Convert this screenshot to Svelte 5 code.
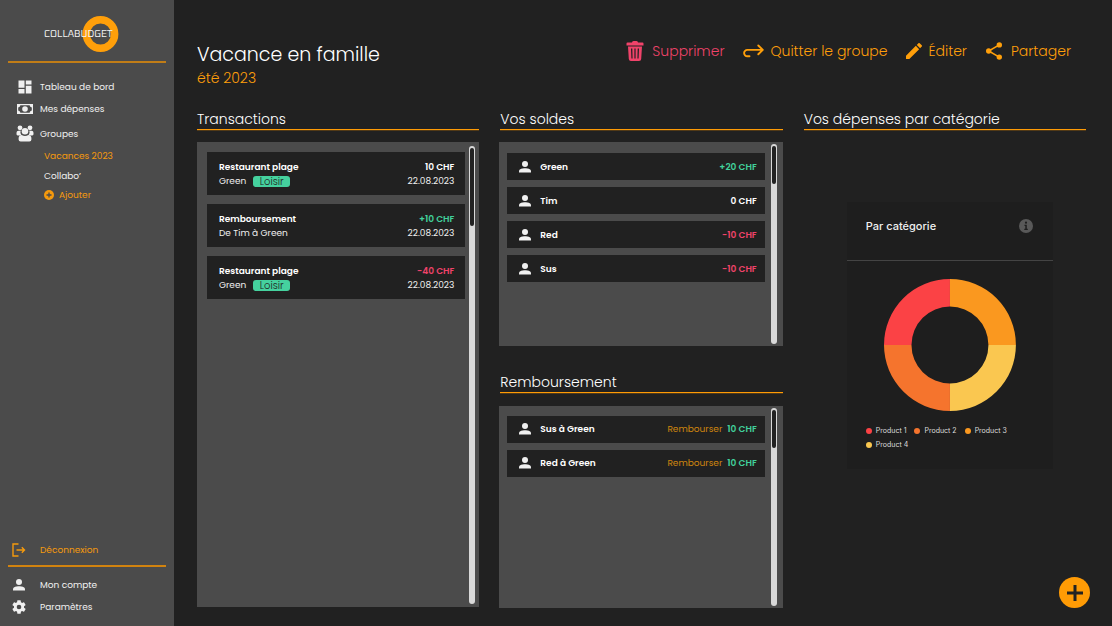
<script>
  const transactions = [
    { title: 'Restaurant plage', who: 'Green', tag: 'Loisir', amount: '10 CHF', tone: '', date: '22.08.2023' },
    { title: 'Remboursement', who: 'De Tim à Green', tag: '', amount: '+10 CHF', tone: 'plus', date: '22.08.2023' },
    { title: 'Restaurant plage', who: 'Green', tag: 'Loisir', amount: '-40 CHF', tone: 'minus', date: '22.08.2023' }
  ];
  const balances = [
    { name: 'Green', amount: '+20 CHF', tone: 'plus' },
    { name: 'Tim', amount: '0 CHF', tone: '' },
    { name: 'Red', amount: '-10 CHF', tone: 'minus' },
    { name: 'Sus', amount: '-10 CHF', tone: 'minus' }
  ];
  const refunds = ['Sus à Green', 'Red à Green'];
  const products = [
    { name: 'Product 1', color: '#fb4245' },
    { name: 'Product 2', color: '#f5742d' },
    { name: 'Product 3', color: '#fa981f' },
    { name: 'Product 4', color: '#fac750' }
  ];
</script>

{#snippet person()}
  <svg class="person" width="12" height="12" viewBox="0 0 12 12" aria-hidden="true">
    <circle cx="6" cy="3" r="3" /><path d="M0 11.6V10.2C0 8 3.2 7.2 6 7.2s6 .8 6 3v1.4z" />
  </svg>
{/snippet}

{#snippet scrollbar(kind)}
  <div class="track {kind}" aria-hidden="true"><div class="thumb"></div></div>
{/snippet}

<div class="app">
  <aside>
    <svg class="logo" width="80" height="38" viewBox="0 0 80 38" role="img" aria-label="Collabudget">
      <circle cx="58.5" cy="19" r="14.2" fill="none" stroke="#ff9f0a" stroke-width="7.4" />
      <text x="2" y="22">COLLABUDGET</text>
    </svg>
    <nav class="menu">
      <a href="#bord">
        <svg width="14" height="14" viewBox="0 0 14 14"><path d="M.5 .5h6v7.3h-6zM.5 9h6v4.5h-6zM7.8 .5h5.7v4H7.8zM7.8 5.8h5.7v7.7H7.8z" /></svg>
        Tableau de bord
      </a>
      <a href="#depenses">
        <svg width="16" height="10" viewBox="0 0 16 10"><path fill-rule="evenodd" d="M0 0h16v10H0zM3.4 1.2A2.6 2.6 0 0 1 1.2 3.4v3.2a2.6 2.6 0 0 1 2.2 2.2h9.2a2.6 2.6 0 0 1 2.2-2.2V3.4a2.6 2.6 0 0 1-2.2-2.2z" /><circle cx="8" cy="5" r="2.8" /></svg>
        Mes dépenses
      </a>
      <a class="groups" href="#groupes">
        <svg width="18" height="17" viewBox="0 0 18 17">
          <circle cx="4" cy="2.8" r="2.4" /><circle cx="14" cy="2.8" r="2.4" />
          <path d="M.5 9.3V7.8Q.5 5.8 2.5 5.8h2.3c-.8 1.8-.2 3.2.6 3.9L4 10.4H1.7Q.5 10.4.5 9.3zM17.5 9.3V7.8Q17.5 5.8 15.5 5.8h-2.3c.8 1.8.2 3.2-.6 3.9l1.4.7h2.3q1.2 0 1.2-1.1z" />
          <circle cx="9" cy="6.2" r="3.3" />
          <path d="M2.6 14.5v-1.2q0-3 3-3.3Q9 12.2 12.4 10q3 .3 3 3.3v1.2q0 2-2 2H4.6q-2 0-2-2z" />
        </svg>
        Groupes
      </a>
      <a class="sub current" href="#vacances">Vacances 2023</a>
      <a class="sub" href="#collabo">Collabo’</a>
      <a class="sub add" href="#ajouter">
        <svg width="10" height="10" viewBox="0 0 10 10"><circle cx="5" cy="5" r="5" /><path d="M5 2.5v5M2.5 5h5" stroke="#4b4b4b" stroke-width="1.3" /></svg>
        Ajouter
      </a>
    </nav>
    <nav class="account">
      <a class="logout" href="#deconnexion">
        <svg class="outline" width="14" height="14" viewBox="0 0 14 14" stroke-width="1.4"><path d="M6.5 1H1v12h5.5M4.5 7h8M9.8 4.3 12.5 7 9.8 9.7" /></svg>
        Déconnexion
      </a>
      <a href="#compte"><span class="slot">{@render person()}</span>Mon compte</a>
      <a href="#parametres">
        <svg width="14" height="14" viewBox="2 2 20 20"><path d="M19.14 12.94c.04-.3.06-.61.06-.94s-.02-.64-.07-.94l2.03-1.58a.49.49 0 0 0 .12-.61l-1.92-3.32a.49.49 0 0 0-.59-.22l-2.39.96a7 7 0 0 0-1.62-.94l-.36-2.54A.48.48 0 0 0 13.92 2.4h-3.84a.48.48 0 0 0-.48.41l-.36 2.54c-.59.24-1.13.57-1.62.94l-2.39-.96a.49.49 0 0 0-.59.22L2.74 8.87a.48.48 0 0 0 .12.61l2.03 1.58a6 6 0 0 0 0 1.88l-2.03 1.58a.49.49 0 0 0-.12.61l1.92 3.32c.12.22.37.29.59.22l2.39-.96c.5.38 1.03.7 1.62.94l.36 2.54c.05.24.24.41.48.41h3.84c.24 0 .44-.17.47-.41l.36-2.54a7 7 0 0 0 1.62-.94l2.39.96c.22.08.47 0 .59-.22l1.92-3.32a.48.48 0 0 0-.12-.61zM12 15.3a3.3 3.3 0 1 1 0-6.6 3.3 3.3 0 0 1 0 6.6z" /></svg>
        Paramètres
      </a>
    </nav>
  </aside>

  <main>
    <header>
      <div>
        <h1>Vacance en famille</h1>
        <p class="season">été 2023</p>
      </div>
      <div class="actions">
        <button class="danger">
          <svg width="18" height="20" viewBox="0 0 18 20"><path fill-rule="evenodd" d="M6 1.5Q6 0 7.5 0h3Q12 0 12 1.5h4.5Q17.5 1.5 17.5 2.5V4.5H.5V2.5Q.5 1.5 1.5 1.5zM2 5.5h14L15.2 18q-.1 2-2.2 2H5q-2.1 0-2.2-2zM5 7.5l.4 10h1.2l-.3-10zm3.4 0v10h1.2v-10zm3.3 0-.3 10h1.2l.4-10z" /></svg>
          Supprimer
        </button>
        <button>
          <svg class="outline" width="21" height="14" viewBox="0 0 21 14" stroke-width="1.9" stroke-linecap="round" stroke-linejoin="round"><path d="M6.5 12.3H4.3a3.2 3.2 0 0 1 0-6.4H19.5M15.3 1.5l4.5 4.4-4.5 4.4" /></svg>
          Quitter le groupe
        </button>
        <button>
          <svg width="16" height="16" viewBox="3 3 18 18"><path d="M3 17.25V21h3.75L17.81 9.94l-3.75-3.75zM20.71 7.04a1 1 0 0 0 0-1.41l-2.34-2.34a1 1 0 0 0-1.41 0l-1.83 1.83 3.75 3.75z" /></svg>
          Éditer
        </button>
        <button class="share">
          <svg width="16" height="18" viewBox="0 0 16 18"><path d="M13.3 2.9 2.7 9l10.6 6.1" fill="none" stroke="#ff9f0a" stroke-width="1.6" /><circle cx="13.3" cy="2.9" r="2.7" /><circle cx="2.7" cy="9" r="2.7" /><circle cx="13.3" cy="15.1" r="2.7" /></svg>
          Partager
        </button>
      </div>
    </header>

    <div class="columns">
      <section>
        <h2>Transactions</h2>
        <div class="panel wide">
          <ul class="transactions">
            {#each transactions as t}
              <li>
                <div class="line"><strong>{t.title}</strong><strong class={t.tone}>{t.amount}</strong></div>
                <div class="line"><span class="who">{t.who}{#if t.tag}<span class="tag">{t.tag}</span>{/if}</span><span>{t.date}</span></div>
              </li>
            {/each}
          </ul>
          {@render scrollbar('long')}
        </div>
      </section>

      <div class="stack">
        <section>
          <h2>Vos soldes</h2>
          <div class="panel">
            <ul>
              {#each balances as b}
                <li>{@render person()}<strong class="name">{b.name}</strong><strong class={b.tone}>{b.amount}</strong></li>
              {/each}
            </ul>
            {@render scrollbar('short')}
          </div>
        </section>
        <section class="refunds">
          <h2>Remboursement</h2>
          <div class="panel">
            <ul>
              {#each refunds as r}
                <li>{@render person()}<strong class="name">{r}</strong><button class="refund">Rembourser</button><strong class="plus">10 CHF</strong></li>
              {/each}
            </ul>
            {@render scrollbar('short')}
          </div>
        </section>
      </div>

      <section>
        <h2>Vos dépenses par catégorie</h2>
        <div class="card">
          <div class="cardhead">
            <h3>Par catégorie</h3>
            <svg width="14" height="14" viewBox="0 0 14 14" role="img" aria-label="Information"><circle cx="7" cy="7" r="7" fill="#595959" /><circle cx="7" cy="3.7" r="1.1" fill="#1e1e1e" /><path d="M5.5 5.8h2.3v4h1v1.2H5.3V9.8h1V7h-.8z" fill="#1e1e1e" /></svg>
          </div>
          <svg class="donut" viewBox="0 0 132 132" role="img" aria-label="Répartition par catégorie">
            <path fill={products[0].color} d="M0 66A66 66 0 0 1 66 0V27.5A38.5 38.5 0 0 0 27.5 66z" />
            <path fill={products[2].color} d="M66 0A66 66 0 0 1 132 66H104.5A38.5 38.5 0 0 0 66 27.5z" />
            <path fill={products[3].color} d="M132 66A66 66 0 0 1 66 132V104.5A38.5 38.5 0 0 0 104.5 66z" />
            <path fill={products[1].color} d="M66 132A66 66 0 0 1 0 66H27.5A38.5 38.5 0 0 0 66 104.5z" />
          </svg>
          <ul class="legend">
            {#each products as p}
              <li><i style="background: {p.color}"></i>{p.name}</li>
            {/each}
          </ul>
        </div>
      </section>
    </div>
  </main>

  <button class="fab" aria-label="Ajouter une dépense">
    <svg width="16" height="16" viewBox="0 0 16 16"><path d="M8 0v16M0 8h16" stroke="#222" stroke-width="3" /></svg>
  </button>
</div>

<style>
  :global(body) { margin: 0; background: #212121; }
  * { box-sizing: border-box; }
  .app {
    display: grid;
    grid-template-columns: 174px minmax(0, 1fr);
    min-height: 100vh;
    font-family: Poppins, Inter, sans-serif;
    font-size: 9px;
    line-height: 14px;
    color: #f0f0f0;
    white-space: nowrap;
  }
  h1, h2, h3, p, ul { margin: 0; padding: 0; list-style: none; }
  button { padding: 0; border: 0; background: none; font: inherit; color: inherit; cursor: pointer; }
  a { color: inherit; text-decoration: none; }
  svg { flex: none; fill: currentColor; }
  svg.outline { fill: none; stroke: currentColor; }
  strong { font-weight: 600; color: #fff; }

  aside { display: flex; flex-direction: column; padding: 15px 8px 8px; background: #4b4b4b; }
  .logo { align-self: center; margin-left: -10px; }
  .logo text { font-family: Oxanium, "Chakra Petch", Inter, sans-serif; font-size: 10px; font-weight: 400; fill: #f4f4f4; }
  .menu { display: flex; flex-direction: column; margin-top: 8px; padding-top: 13px; border-top: 2px solid #c17d17; }
  aside a { display: flex; align-items: center; height: 22px; }
  .menu a { display: grid; grid-template-columns: 32px 1fr; }
  .menu a > svg { justify-self: center; margin-left: 2px; }
  .menu .groups { height: 26px; padding-top: 1px; }
  .menu .sub { display: flex; gap: 5px; height: 20px; margin-left: 36px; }
  .menu .add { height: 18px; }
  .menu .add > svg { margin: 0; }
  .current, .add, .logout { color: #f59a0d; }
  .account { margin-top: auto; }
  .account a { display: grid; grid-template-columns: 22px 1fr; column-gap: 10px; }
  .account a > svg, .slot { justify-self: center; }
  .slot { display: flex; }
  .account .logout { height: 28px; margin-bottom: 7px; padding-bottom: 4px; border-bottom: 2px solid #d1830f; }

  main { display: flex; flex-direction: column; padding: 39px 26px 18px 23px; background: #212121; }
  header { display: flex; justify-content: space-between; align-items: flex-start; padding-right: 15px; }
  h1 { font-size: 19px; line-height: 32px; font-weight: 300; color: #fff; }
  .season { font-size: 14px; line-height: 14px; font-weight: 300; color: #ff9f0a; }
  .actions { display: flex; gap: 19px; color: #ff9f0a; }
  .actions button { display: flex; align-items: center; gap: 6px; height: 24px; font-size: 14px; font-weight: 300; }
  .actions .danger { gap: 8px; color: #f0436a; }
  .actions .share { gap: 9px; }

  .columns { flex: 1; display: grid; grid-template-columns: repeat(3, minmax(0, 1fr)); gap: 21px; margin-top: 23px; }
  section { display: flex; flex-direction: column; }
  .stack { display: grid; grid-template-rows: 1fr 1fr; gap: 25px; }
  h2 { padding-top: 2px; border-bottom: 1px solid #ff9b05; box-shadow: 0 1px #523a17; font-size: 14px; line-height: 19px; font-weight: 300; color: #fff; }
  .panel { flex: 1; display: flex; gap: 6px; margin-top: 12px; padding: 2px 6px 2px 8px; background: #4b4b4b; }
  .stack .panel { margin-left: -1px; }
  .refunds .panel { margin-top: 13px; }
  .panel ul { flex: 1; display: flex; flex-direction: column; gap: 7px; padding-top: 9px; }
  .refunds .panel ul { padding-top: 8px; }
  .panel li { display: flex; align-items: center; height: 27px; padding: 0 8px 0 12px; background: #212121; }
  .panel .name { flex: 1; margin-left: 9px; }
  .refund { margin-right: 5px; color: #cf860e; }
  .panel.wide { gap: 4px; margin-bottom: 1px; padding: 4px 4px 3px 10px; }
  .panel .transactions { gap: 9px; padding-top: 6px; }
  .transactions li { flex-direction: column; align-items: stretch; justify-content: center; height: 43px; padding: 1px 11px 0 12px; }
  .line { display: flex; justify-content: space-between; line-height: 14px; }
  .who { display: flex; align-items: center; gap: 7px; }
  .tag { width: 37px; border-radius: 3px; background: #45d19e; color: #222; font-size: 10px; font-weight: 300; line-height: 11px; text-align: center; }
  strong.plus { color: #41d19c; }
  strong.minus { color: #f0436a; }
  .track { width: 6px; padding: 2px 1px; border-radius: 3px; background: #d9d9d9; }
  .thumb { height: 38px; border-radius: 2px; background: #222; }
  .long .thumb { height: 78px; }

  .card { display: flex; flex-direction: column; align-self: center; width: 73%; margin: 72px 0 0 10px; padding-bottom: 19px; background: #1e1e1e; }
  .cardhead { display: flex; justify-content: space-between; padding: 17px 20px 27px 19px; border-bottom: 1px solid #444; }
  h3 { font-family: Inter, sans-serif; font-size: 11px; line-height: 14px; font-weight: 500; }
  .donut { align-self: center; width: 64%; margin-top: 18px; }
  .legend { display: flex; flex-wrap: wrap; gap: 4px 8px; margin: 15px 19px 0; font-family: Inter, sans-serif; font-size: 7px; line-height: 10px; color: #ddd; }
  .legend li { display: flex; align-items: center; gap: 4px; }
  .legend i { width: 6px; height: 6px; border-radius: 50%; }

  .fab { position: fixed; right: 22px; bottom: 18px; display: grid; place-items: center; width: 31px; height: 31px; border-radius: 50%; background: #ff9b05; }
</style>
